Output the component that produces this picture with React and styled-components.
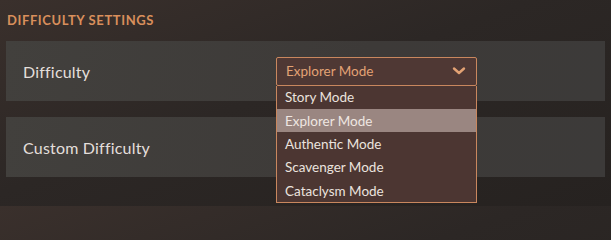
import React from "react";
import styled, { createGlobalStyle } from "styled-components";

const Global = createGlobalStyle`
  html, body { margin: 0; padding: 0; }
  body {
    width: 611px;
    height: 206px;
    overflow: hidden;
    background: linear-gradient(160deg, #3a302c 0%, #2c2725 45%, #262220 100%);
    font-family: Lato, "Noto Sans", sans-serif;
  }
`;

const Page = styled.div`
  padding: 14px 6px 0 6px;
  display: flex;
  flex-direction: column;
`;

const SectionTitle = styled.h2`
  margin: 0 0 14px 1px;
  font-size: 13px;
  font-weight: 700;
  letter-spacing: 0.6px;
  line-height: 13px;
  color: #d98f5c;
  text-transform: uppercase;
`;

const Card = styled.div`
  height: 60px;
  margin-bottom: 16px;
  padding-left: 17px;
  display: grid;
  grid-template-columns: 253px 201px;
  align-items: center;
  background: linear-gradient(100deg, #42403d 0%, #3d3a38 60%, #3c3a39 100%);
  width: 582px;
`;

const Label = styled.span`
  font-size: 16px;
  color: #e4dfdb;
  letter-spacing: 0.2px;
`;

const SelectWrap = styled.div`
  position: relative;
  width: 201px;
`;

const SelectBox = styled.div`
  box-sizing: border-box;
  height: 29px;
  border: 1px solid #c9875e;
  border-radius: 2px;
  background: #4f3834;
  display: flex;
  align-items: center;
  justify-content: space-between;
  padding: 0 10px 0 9px;
  font-size: 13.5px;
  color: #e3a274;
`;

const Chevron = styled.svg`
  width: 14px;
  height: 10px;
`;

const List = styled.ul`
  position: absolute;
  top: 100%;
  left: 0;
  right: 0;
  margin: 0;
  padding: 0;
  list-style: none;
  box-sizing: border-box;
  border: 1px solid #c9875e;
  border-top: none;
  background: #4c3632;
  z-index: 2;
`;

const Item = styled.li`
  height: 23.4px;
  display: flex;
  align-items: center;
  padding-left: 8px;
  font-size: 13.5px;
  color: ${(p) => (p.$active ? "#efe6e2" : "#ebe3df")};
  background: ${(p) => (p.$active ? "#9a8681" : "transparent")};
`;

const options = ["Story Mode", "Explorer Mode", "Authentic Mode", "Scavenger Mode", "Cataclysm Mode"];

export default function App() {
  return (
    <>
      <Global />
      <Page>
        <SectionTitle>Difficulty Settings</SectionTitle>
        <Card>
          <Label>Difficulty</Label>
          <SelectWrap>
            <SelectBox>
              <span>Explorer Mode</span>
              <Chevron viewBox="0 0 14 10">
                <path d="M2 2.5 L7 7 L12 2.5" fill="none" stroke="#e3a274" strokeWidth="2.4" strokeLinecap="round" strokeLinejoin="round" />
              </Chevron>
            </SelectBox>
            <List>
              {options.map((o) => (
                <Item key={o} $active={o === "Explorer Mode"}>{o}</Item>
              ))}
            </List>
          </SelectWrap>
        </Card>
        <Card>
          <Label>Custom Difficulty</Label>
        </Card>
      </Page>
    </>
  );
}
